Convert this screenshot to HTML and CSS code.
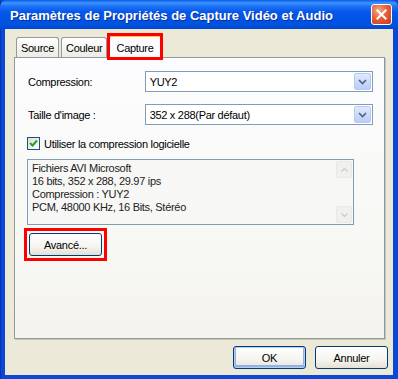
FILE: index.html
```html
<!DOCTYPE html>
<html lang="fr">
<head>
<meta charset="utf-8">
<title>Paramètres</title>
<link rel="stylesheet" href="styles.css">
</head>
<body>
<div class="window">
  <div class="titlebar">
    <span class="title">Paramètres de Propriétés de Capture Vidéo et Audio</span>
    <span class="close"><svg width="21" height="21" viewBox="0 0 21 21"><path d="M6 6 L15 15 M15 6 L6 15" stroke="#fff" stroke-width="2.2" stroke-linecap="square"/></svg></span>
  </div>
  <div class="client">
    <div class="tabs">
      <span class="tab">Source</span>
      <span class="tab">Couleur</span>
      <span class="hl tab-hl"><span class="tab active">Capture</span></span>
    </div>
    <div class="panel">
      <div class="row">
        <span class="label">Compression:</span>
        <div class="combo"><span class="val">YUY2</span><span class="drop"><svg width="9" height="6" viewBox="0 0 9 6"><path d="M1 1 L4.5 4.5 L8 1" fill="none" stroke="#4D6185" stroke-width="1.6"/></svg></span></div>
      </div>
      <div class="row">
        <span class="label">Taille d'image :</span>
        <div class="combo"><span class="val">352 x 288(Par défaut)</span><span class="drop"><svg width="9" height="6" viewBox="0 0 9 6"><path d="M1 1 L4.5 4.5 L8 1" fill="none" stroke="#4D6185" stroke-width="1.6"/></svg></span></div>
      </div>
      <label class="check"><span class="box"><svg width="9" height="9" viewBox="0 0 9 9"><path d="M1 4 L3.5 6.5 L8 1.5" fill="none" stroke="#21A121" stroke-width="2"/></svg></span>Utiliser la compression logicielle</label>
      <div class="info">
        <div class="info-text">Fichiers AVI Microsoft<br>16 bits, 352 x 288, 29.97 ips<br>Compression : YUY2<br>PCM, 48000 KHz, 16 Bits, Stéréo</div>
        <div class="scroll">
          <span class="sbtn"><svg width="7" height="4" viewBox="0 0 7 4"><path d="M0.5 3.5 L3.5 0.5 L6.5 3.5" fill="none" stroke="#C9CCD2" stroke-width="1.3"/></svg></span>
          <span class="sbtn"><svg width="7" height="4" viewBox="0 0 7 4"><path d="M0.5 0.5 L3.5 3.5 L6.5 0.5" fill="none" stroke="#C9CCD2" stroke-width="1.3"/></svg></span>
        </div>
      </div>
      <div class="adv-wrap"><span class="hl adv-hl"><button class="btn">Avancé...</button></span></div>
    </div>
    <div class="footer">
      <button class="btn default">OK</button>
      <button class="btn">Annuler</button>
    </div>
  </div>
</div>
</body>
</html>
```
FILE: styles.css
```css
* { box-sizing: border-box; }
html, body { margin: 0; padding: 0; background: #fff; }
body { font-family: "Liberation Sans", Arial, sans-serif; font-size: 11px; letter-spacing: -0.3px; color: #000; }
.window {
  width: 398px; height: 379px;
  display: flex; flex-direction: column;
  background: #0A49D6;
  padding: 0 5px 4px 4px;
  border-left: 1px solid #0831B8;
}
.titlebar {
  height: 30px;
  margin: 0 -5px 0 -5px;
  padding: 0 6px 0 10px;
  display: flex; align-items: center; justify-content: space-between;
  background: linear-gradient(to bottom, #0A5BE9 0px, #3E94FD 3px, #1E74F5 6px, #0657EA 12px, #0054E3 20px, #0050DC 26px, #0046C8 30px);
  border-radius: 7px 7px 0 0;
}
.title {
  color: #fff; font-weight: bold; font-size: 13px;
  font-family: "Liberation Sans", Arial, sans-serif;
  letter-spacing: 0;
  white-space: nowrap;
  text-shadow: 1px 1px 0 #0A2F8F;
  padding-top: 1px;
}
.close {
  width: 21px; height: 21px;
  border: 1px solid #fff;
  border-radius: 3px;
  background: radial-gradient(circle at 35% 30%, #F8A98C 0%, #E5603A 45%, #C7381A 100%);
  display: flex; align-items: center; justify-content: center;
}
.close svg { display: block; }
.client {
  flex: 1;
  background: #ECE9D8;
  padding: 6px 8px 6px 9px;
  display: flex; flex-direction: column;
}
.tabs {
  display: flex; align-items: flex-end;
  height: 22px;
  padding-left: 2px;
  position: relative; z-index: 1;
}
.tab {
  height: 20px;
  padding: 0 4px;
  margin-right: 2px;
  background: linear-gradient(to bottom, #FFFFFF, #ECEBE6);
  border: 1px solid #919B9C;
  border-bottom: none;
  border-radius: 3px 3px 0 0;
  display: flex; align-items: center;
}
.hl { outline: 3px solid #FF0000; display: inline-block; }
.tab-hl { display: flex; margin-bottom: -1px; outline-offset: -1px; }
.tab.active {
  height: 23px;
  margin: 0;
  background: #FCFCFE;
  border-top: 2px solid #FFC83C;
  padding: 0 6px;
}
.panel {
  height: 282px;
  background: linear-gradient(to bottom, #FCFCFE 0%, #F8F8F5 60%, #F4F3EE 100%);
  border: 1px solid #919B9C;
  border-right-color: #7F9DB9;
  box-shadow: 1px 1px 0 #C7C5B2;
  padding: 13px 11px 0 12px;
  display: flex; flex-direction: column;
}
.row {
  display: flex; align-items: center;
  margin-bottom: 12px;
}
.label { width: 118px; padding-left: 1px; }
.combo {
  width: 229px; height: 21px;
  border: 1px solid #7F9DB9;
  background: #fff;
  display: flex; align-items: center; justify-content: space-between;
  padding: 1px 1px 1px 4px;
}
.val { padding-top: 1px; }
.drop {
  width: 17px; height: 17px;
  background: linear-gradient(to bottom, #E0E9FD, #B9CDF8);
  border: 1px solid #B6C8F5;
  border-radius: 2px;
  display: flex; align-items: center; justify-content: center;
}
.check {
  display: flex; align-items: center;
  height: 13px;
  margin-bottom: 9px;
}
.box {
  width: 13px; height: 13px;
  border: 1px solid #1C5180;
  background: linear-gradient(135deg, #DCDCD7, #FFFFFF);
  margin-right: 4px;
  display: flex; align-items: center; justify-content: center;
}
.info {
  width: 327px; height: 66px;
  border: 1px solid #7F9DB9;
  background: #F7F7F5;
  display: flex;
}
.info-text {
  flex: 1;
  padding: 2px 0 0 4px;
  line-height: 13px;
  color: #222;
}
.scroll {
  width: 17px;
  display: flex; flex-direction: column; justify-content: space-between;
  padding: 1px 1px 1px 0;
}
.sbtn {
  width: 16px; height: 17px;
  background: #F0F0EC;
  border: 1px solid #E8E8E4;
  border-radius: 2px;
  display: flex; align-items: center; justify-content: center;
}
.adv-wrap { padding-top: 8px; padding-left: 2px; }
.adv-hl { outline-offset: 2px; }
.adv-hl .btn { display: block; }
.btn {
  font-family: "Liberation Sans", Arial, sans-serif;
  font-size: 11px;
  letter-spacing: -0.3px;
  color: #000;
  width: 73px; height: 23px;
  border: 1px solid #003C74;
  border-radius: 3px;
  background: linear-gradient(to bottom, #FFFFFF 0%, #F5F4EF 60%, #E3E1D6 100%);
  padding: 0;
  cursor: default;
}
.btn.default {
  box-shadow: inset 0 0 0 1px #B6CDF5, inset 0 -1px 0 2px #8DB2E3;
}
.footer {
  display: flex; justify-content: flex-end; gap: 9px;
  padding-top: 7px;
  margin-right: -3px;
}
```
